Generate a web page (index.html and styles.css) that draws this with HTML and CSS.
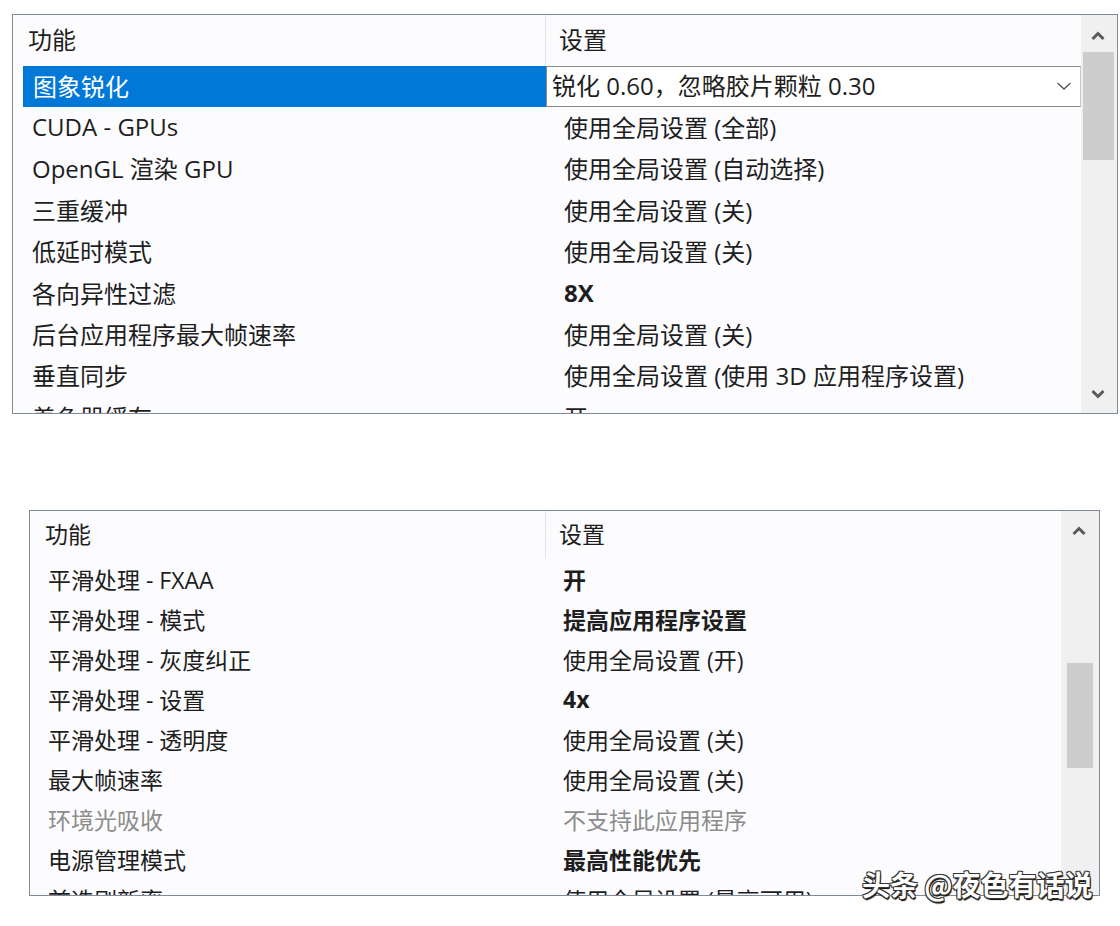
FILE: index.html
```html
<!DOCTYPE html>
<html lang="zh-CN">
<head>
<meta charset="utf-8">
<title>NVIDIA 设置</title>
<link rel="stylesheet" href="styles.css">
</head>
<body>
<div class="page">
  <section class="panel panel-top">
    <div class="list">
      <div class="head"><div class="hc1">功能</div><div class="hc2">设置</div></div>
      <div class="rows">
        <div class="row sel"><div class="c1">图象锐化</div><div class="c2 dd"><span>锐化 0.60，忽略胶片颗粒 0.30</span><svg class="dd-arrow" width="16" height="10" viewBox="0 0 16 10"><path d="M1.5 2 L8 8 L14.5 2" fill="none" stroke="#555" stroke-width="1.3"/></svg></div></div>
        <div class="row"><div class="c1">CUDA - GPUs</div><div class="c2">使用全局设置 (全部)</div></div>
        <div class="row"><div class="c1">OpenGL 渲染 GPU</div><div class="c2">使用全局设置 (自动选择)</div></div>
        <div class="row"><div class="c1">三重缓冲</div><div class="c2">使用全局设置 (关)</div></div>
        <div class="row"><div class="c1">低延时模式</div><div class="c2">使用全局设置 (关)</div></div>
        <div class="row"><div class="c1">各向异性过滤</div><div class="c2 b">8X</div></div>
        <div class="row"><div class="c1">后台应用程序最大帧速率</div><div class="c2">使用全局设置 (关)</div></div>
        <div class="row"><div class="c1">垂直同步</div><div class="c2">使用全局设置 (使用 3D 应用程序设置)</div></div>
        <div class="row"><div class="c1">着色器缓存</div><div class="c2">开</div></div>
      </div>
    </div>
    <div class="sb">
      <div class="sb-btn"><svg width="16" height="12" viewBox="0 0 16 12"><path d="M2.5 9 L8 3.5 L13.5 9" fill="none" stroke="#5a5a5a" stroke-width="3"/></svg></div>
      <div class="sb-track"><div class="thumb"></div></div>
      <div class="sb-btn down"><svg width="16" height="12" viewBox="0 0 16 12"><path d="M2.5 3 L8 8.5 L13.5 3" fill="none" stroke="#5a5a5a" stroke-width="3"/></svg></div>
    </div>
  </section>

  <section class="panel panel-bot">
    <div class="list">
      <div class="head"><div class="hc1">功能</div><div class="hc2">设置</div></div>
      <div class="rows">
        <div class="row"><div class="c1">平滑处理 - FXAA</div><div class="c2 b">开</div></div>
        <div class="row"><div class="c1">平滑处理 - 模式</div><div class="c2 b">提高应用程序设置</div></div>
        <div class="row"><div class="c1">平滑处理 - 灰度纠正</div><div class="c2">使用全局设置 (开)</div></div>
        <div class="row"><div class="c1">平滑处理 - 设置</div><div class="c2 b">4x</div></div>
        <div class="row"><div class="c1">平滑处理 - 透明度</div><div class="c2">使用全局设置 (关)</div></div>
        <div class="row"><div class="c1">最大帧速率</div><div class="c2">使用全局设置 (关)</div></div>
        <div class="row dim"><div class="c1">环境光吸收</div><div class="c2">不支持此应用程序</div></div>
        <div class="row"><div class="c1">电源管理模式</div><div class="c2 b">最高性能优先</div></div>
        <div class="row"><div class="c1">首选刷新率</div><div class="c2">使用全局设置 (最高可用)</div></div>
      </div>
    </div>
    <div class="sb">
      <div class="sb-btn"><svg width="16" height="12" viewBox="0 0 16 12"><path d="M2.5 9 L8 3.5 L13.5 9" fill="none" stroke="#5a5a5a" stroke-width="3"/></svg></div>
      <div class="sb-track"><div class="thumb"></div></div>
    </div>
  </section>

  <div class="watermark">头条 @夜色有话说</div>
</div>
</body>
</html>
```

FILE: styles.css
```css
html, body {
  margin: 0;
  padding: 0;
  background: #ffffff;
}

body {
  font-family: "Open Sans", "Noto Sans CJK SC", sans-serif;
  color: #1e1e1e;
}

.page {
  position: relative;
  width: 1120px;
  height: 926px;
  padding-top: 14px;
  box-sizing: border-box;
}

.panel {
  display: flex;
  background: #fcfcfe;
  border: 1px solid #7f8b98;
  box-sizing: border-box;
  overflow: hidden;
}

.panel-top {
  margin-left: 12px;
  width: 1106px;
  height: 400px;
  font-size: 24px;
}

.panel-bot {
  margin-left: 29px;
  margin-top: 96px;
  width: 1071px;
  height: 386px;
  font-size: 23px;
}

.list {
  flex: 1;
  overflow: hidden;
}

.head {
  display: flex;
  align-items: flex-start;
}

.panel-top .head { height: 51px; }
.panel-bot .head { height: 49px; }

.hc1 {
  width: 533px;
  padding-left: 15px;
  padding-bottom: 4px;
  box-sizing: border-box;
  display: flex;
  align-items: center;
  border-right: 1px solid #e4e4e8;
}
.panel-top .hc1 { height: 50px; }
.panel-bot .hc1 { width: 516px; height: 47px; }

.hc2 {
  padding-left: 13px;
  padding-bottom: 4px;
  box-sizing: border-box;
  display: flex;
  align-items: center;
}
.panel-top .hc2 { height: 50px; }
.panel-bot .hc2 { height: 47px; }

.rows {
  padding-left: 10px;
}

.row {
  display: flex;
  align-items: stretch;
  white-space: nowrap;
}

.panel-top .row { height: 41.4px; }
.panel-bot .row { height: 40.1px; }

.c1 {
  width: 523px;
  padding-left: 9px;
  padding-bottom: 3px;
  box-sizing: border-box;
  display: flex;
  align-items: center;
}
.panel-bot .c1 { width: 506px; padding-left: 8px; }

.c2 {
  flex: 1;
  padding-left: 18px;
  padding-bottom: 3px;
  box-sizing: border-box;
  display: flex;
  align-items: center;
}
.panel-bot .c2 { padding-left: 17px; }

.b { font-weight: 700; }

.dim { color: #8c8c8c; }

.sel .c1 {
  background: #0078d7;
  color: #ffffff;
  padding-left: 10px;
}

.dd {
  background: #ffffff;
  border: 1px solid #8a8a8a;
  border-right-color: #c8c8c8;
  padding-left: 5px;
  padding-right: 8px;
  padding-bottom: 4px;
  justify-content: space-between;
}

.dd-arrow {
  flex: none;
  margin-top: 3px;
}

.sb {
  width: 36px;
  display: flex;
  flex-direction: column;
  background: #f0f0f0;
  flex: none;
}

.panel-bot .sb {
  width: 38px;
}

.sb-btn {
  height: 37px;
  display: flex;
  align-items: center;
  justify-content: center;
  flex: none;
}
.panel-top .sb-btn { padding-top: 4px; padding-right: 3px; box-sizing: border-box; }
.panel-bot .sb-btn { height: 40px; padding-right: 2px; }

.sb-track {
  flex: 1;
  padding: 0 3px 0 2px;
}

.thumb {
  background: #cdcdcd;
}
.panel-top .thumb { height: 108px; }
.panel-bot .thumb { height: 105px; margin-top: 112px; margin-left: 4px; margin-right: 3px; }

.panel-top .sb-btn.down { height: 36px; padding-top: 0; padding-bottom: 2px; }

.watermark {
  position: absolute;
  left: 862px;
  top: 866px;
  font-family: "Noto Sans CJK SC", sans-serif;
  font-size: 28px;
  font-weight: 700;
  line-height: 36px;
  color: #ffffff;
  text-shadow: -1px -1px 0 #333, 1px -1px 0 #333, -1px 1px 0 #333, 1px 1px 0 #333, 1px 2px 1px #000;
  white-space: nowrap;
}
```
